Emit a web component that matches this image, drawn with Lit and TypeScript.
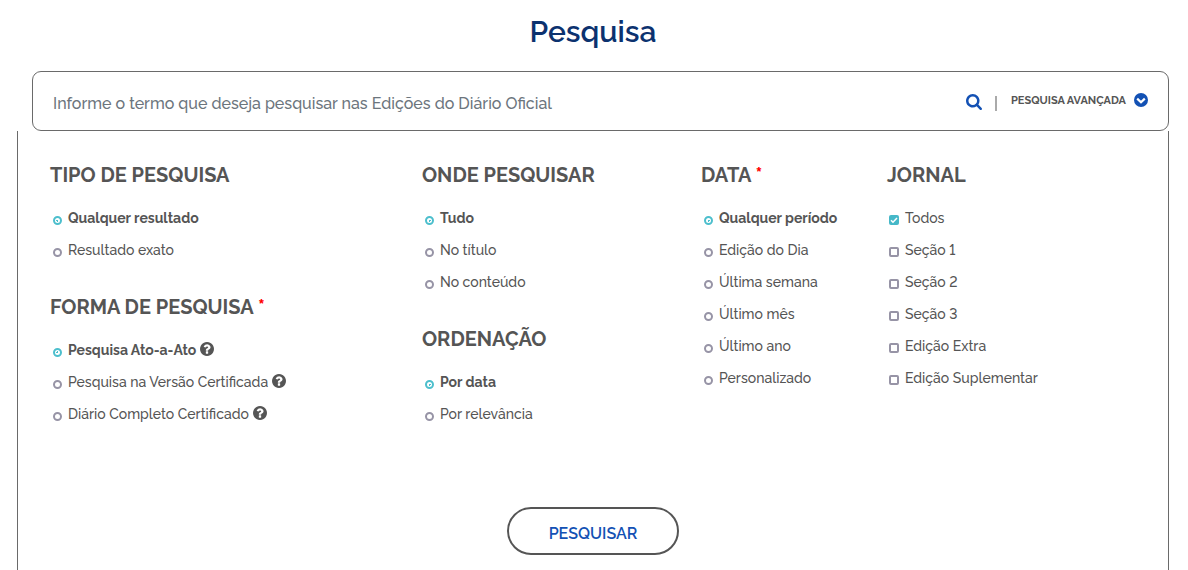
import { LitElement, html, css, svg, nothing } from "lit";
import { customElement, property } from "lit/decorators.js";

interface Option {
  label: string;
  checked?: boolean;
  help?: boolean;
}

interface Group {
  name: string;
  title: string;
  required?: boolean;
  multiple?: boolean;
  options: Option[];
}

const COLUMNS: Group[][] = [
  [
    {
      name: "tipo",
      title: "TIPO DE PESQUISA",
      options: [{ label: "Qualquer resultado", checked: true }, { label: "Resultado exato" }],
    },
    {
      name: "forma",
      title: "FORMA DE PESQUISA",
      required: true,
      options: [
        { label: "Pesquisa Ato-a-Ato", checked: true, help: true },
        { label: "Pesquisa na Versão Certificada", help: true },
        { label: "Diário Completo Certificado", help: true },
      ],
    },
  ],
  [
    {
      name: "onde",
      title: "ONDE PESQUISAR",
      options: [{ label: "Tudo", checked: true }, { label: "No título" }, { label: "No conteúdo" }],
    },
    {
      name: "ordenacao",
      title: "ORDENAÇÃO",
      options: [{ label: "Por data", checked: true }, { label: "Por relevância" }],
    },
  ],
  [
    {
      name: "data",
      title: "DATA",
      required: true,
      options: [
        { label: "Qualquer período", checked: true },
        { label: "Edição do Dia" },
        { label: "Última semana" },
        { label: "Último mês" },
        { label: "Último ano" },
        { label: "Personalizado" },
      ],
    },
  ],
  [
    {
      name: "jornal",
      title: "JORNAL",
      multiple: true,
      options: [
        { label: "Todos", checked: true },
        { label: "Seção 1" },
        { label: "Seção 2" },
        { label: "Seção 3" },
        { label: "Edição Extra" },
        { label: "Edição Suplementar" },
      ],
    },
  ],
];

const searchIcon = html`<svg class="search-icon" viewBox="64 128 1664 1664" aria-hidden="true">
  ${svg`<path fill="currentColor" d="M1216 832q0-185-131.5-316.5t-316.5-131.5-316.5 131.5-131.5 316.5 131.5 316.5 316.5 131.5 316.5-131.5 131.5-316.5zm512 832q0 52-38 90t-90 38q-54 0-90-38l-343-342q-179 124-399 124-143 0-273.5-55.5t-225-150-150-225-55.5-273.5 55.5-273.5 150-225 225-150 273.5-55.5 273.5 55.5 225 150 150 225 55.5 273.5q0 220-124 399l343 343q37 37 37 90z"/>`}
</svg>`;

const chevronIcon = html`<svg class="round-icon" viewBox="0 0 14 14" aria-hidden="true">
  ${svg`<circle cx="7" cy="7" r="7" fill="currentColor"/><path d="M3.2 5.6 7 9.2l3.8-3.6" fill="none" stroke="#fff" stroke-width="2.2"/>`}
</svg>`;

const helpIcon = html`<svg class="round-icon" viewBox="128 128 1536 1536" role="img" aria-label="Ajuda">
  ${svg`<path fill="currentColor" d="M1024 1376v-192q0-14-9-23t-23-9h-192q-14 0-23 9t-9 23v192q0 14 9 23t23 9h192q14 0 23-9t9-23zm256-672q0-88-55.5-163t-138.5-116-170-41q-243 0-371 213-15 24 8 42l132 100q7 6 19 6 16 0 25-12 53-68 86-92 34-24 86-24 48 0 85.5 26t37.5 59q0 38-20 61t-68 45q-63 28-115.5 86.5t-52.5 125.5v36q0 14 9 23t23 9h192q14 0 23-9t9-23q0-19 21.5-49.5t54.5-49.5q32-18 49-28.5t46-35 44.5-48 28-60.5 12.5-81zm384 192q0 209-103 385.5t-279.5 279.5-385.5 103-385.5-103-279.5-279.5-103-385.5 103-385.5 279.5-279.5 385.5-103 385.5 103 279.5 279.5 103 385.5z"/>`}
</svg>`;

@customElement("option-group")
class OptionGroup extends LitElement {
  @property({ attribute: false }) group!: Group;

  static styles = css`
    :host {
      display: block;
    }
    .group {
      border: 0;
      margin: 0;
      padding: 0;
      min-width: 0;
    }
    .title {
      padding: 0;
      margin-bottom: 15px;
      font-size: 20px;
      font-weight: 700;
      line-height: 24px;
    }
    .required {
      color: #f00;
    }
    .option {
      display: flex;
      align-items: center;
      height: 32px;
      padding-left: 3px;
      font-size: 14px;
      white-space: nowrap;
    }
    .option.bold {
      font-weight: 700;
    }
    .mark {
      appearance: none;
      box-sizing: border-box;
      flex: none;
      width: 9px;
      height: 9px;
      margin: 4px 6px 0 0;
      border: 2px solid #9794a6;
      border-radius: 50%;
      background: #fff;
    }
    .mark:checked {
      border-color: #4dbfcd;
      background: radial-gradient(circle, #4dbfcd 1px, #fff 1px);
    }
    .mark.square {
      width: 10px;
      height: 10px;
      margin-left: -1px;
      border-radius: 2px;
    }
    .mark.square:checked {
      background: #46b8c8
        url("data:image/svg+xml,%3Csvg xmlns='http://www.w3.org/2000/svg' viewBox='0 0 10 10'%3E%3Cpath d='M2 5.2 4 7.2 8 3' fill='none' stroke='white' stroke-width='1.5'/%3E%3C/svg%3E")
        border-box center / 10px 10px no-repeat;
      border: 0;
    }
    .round-icon {
      width: 14px;
      height: 14px;
      margin: 0 0 2px 4px;
      flex: none;
    }
  `;

  render() {
    const g = this.group;
    return html`<fieldset class="group">
      <legend class="title">
        ${g.title}${g.required ? html` <span class="required">*</span>` : nothing}
      </legend>
      ${g.options.map(
        (o) => html`<label class="option ${o.checked && !g.multiple ? "bold" : ""}">
          <input
            class="mark ${g.multiple ? "square" : ""}"
            type=${g.multiple ? "checkbox" : "radio"}
            name=${g.name}
            .checked=${!!o.checked}
          /><span>${o.label}</span>${o.help ? helpIcon : nothing}
        </label>`
      )}
    </fieldset>`;
  }
}

@customElement("app-root")
class AppRoot extends LitElement {
  static styles = css`
    :host {
      display: flex;
      flex-direction: column;
      box-sizing: border-box;
      min-height: 100vh;
      padding: 0 19px 0 17px;
      background: #fff;
      color: #555;
      font-family: Raleway, Lato, sans-serif;
      font-weight: 500;
      font-variant-numeric: lining-nums;
    }
    .heading {
      margin: 0;
      padding: 12px 0 19px;
      color: #0c326f;
      font-size: 30px;
      font-weight: 600;
      line-height: 40px;
      text-align: center;
    }
    .search-bar {
      display: flex;
      align-items: center;
      box-sizing: border-box;
      height: 60px;
      margin-left: 15px;
      padding: 0 20px;
      border: 1px solid #6a6a6a;
      border-radius: 9px;
    }
    .term {
      flex: 1;
      min-width: 0;
      height: 24px;
      padding: 4px 0 0;
      border: 0;
      outline: 0;
      background: none;
      color: #555;
      font: inherit;
      font-size: 16px;
    }
    .term::placeholder {
      color: #6c757d;
      opacity: 1;
    }
    .plain {
      display: flex;
      align-items: center;
      padding: 0;
      border: 0;
      background: none;
      color: #1351b4;
      font: inherit;
    }
    .search-icon {
      width: 16px;
      height: 16px;
      margin-top: 2px;
    }
    .divider {
      width: 2px;
      height: 15px;
      margin: 4px 14px 0 13px;
      background: #aaa;
    }
    .advanced {
      gap: 8px;
      padding-bottom: 2px;
      font-size: 11px;
      font-weight: 700;
    }
    .advanced-text {
      color: #555;
    }
    .round-icon {
      width: 14px;
      height: 14px;
    }
    .panel {
      flex: 1;
      padding: 32px 2px 15px 32px;
      border: solid #6a6a6a;
      border-width: 0 1px;
    }
    .columns {
      display: grid;
      grid-template-columns: 4fr 3fr 2fr 3fr;
    }
    .column {
      display: flex;
      flex-direction: column;
      gap: 29px;
      min-width: 0;
    }
    .actions {
      display: flex;
      justify-content: center;
      margin: 77px 30px 0 0;
    }
    .submit {
      min-width: 172px;
      height: 48px;
      padding: 4px 38px 0;
      border: 2px solid #555;
      border-radius: 24px;
      background: #fff;
      color: #1351b4;
      font: inherit;
      font-size: 16px;
      font-weight: 600;
    }
  `;

  render() {
    return html`
      <h1 class="heading">Pesquisa</h1>
      <div class="search-bar" role="search">
        <input
          class="term"
          type="text"
          aria-label="Termo de pesquisa"
          placeholder="Informe o termo que deseja pesquisar nas Edições do Diário Oficial"
        />
        <button class="plain" type="button" aria-label="Pesquisar">${searchIcon}</button>
        <span class="divider"></span>
        <button class="plain advanced" type="button" aria-expanded="true">
          <span class="advanced-text">PESQUISA AVANÇADA</span>${chevronIcon}
        </button>
      </div>
      <form class="panel" @submit=${(e: Event) => e.preventDefault()}>
        <div class="columns">
          ${COLUMNS.map(
            (groups) => html`<div class="column">
              ${groups.map((g) => html`<option-group .group=${g}></option-group>`)}
            </div>`
          )}
        </div>
        <div class="actions"><button class="submit" type="submit">PESQUISAR</button></div>
      </form>
    `;
  }
}
